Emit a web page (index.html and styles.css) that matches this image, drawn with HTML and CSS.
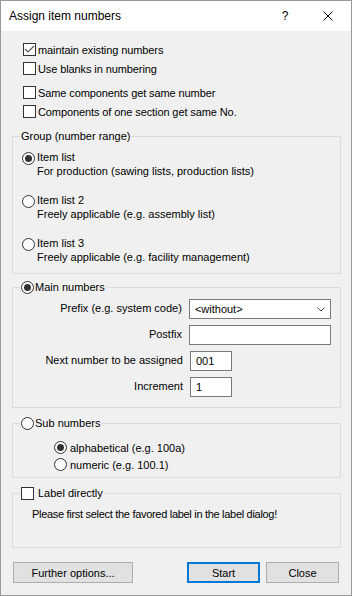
FILE: index.html
```html
<!DOCTYPE html>
<html lang="en">
<head>
    <meta charset="UTF-8">
    <meta name="viewport" content="width=device-width, initial-scale=1.0">
    <title>Assign item numbers</title>
    <link rel="stylesheet" href="styles.css">
</head>
<body>

<div class="window">
    <div class="titlebar">
        <span class="title">Assign item numbers</span>
        <span class="tb-btn help">?</span>
        <span class="tb-btn close">
            <svg width="10" height="10" viewBox="0 0 10 10"><path d="M0.5 0.5 L9.5 9.5 M9.5 0.5 L0.5 9.5" stroke="#000" stroke-width="1" fill="none"/></svg>
        </span>
    </div>

    <div class="content">
        <div class="checks">
            <div class="check-row">
                <span class="check"><svg width="11" height="11" viewBox="0 0 11 11"><path d="M1 5 L4 8 L10 2" stroke="#555" stroke-width="1.2" fill="none"/></svg></span>
                maintain existing numbers
            </div>
            <div class="check-row"><span class="check"></span>Use blanks in numbering</div>
            <div class="check-row spaced"><span class="check"></span>Same components get same number</div>
            <div class="check-row"><span class="check"></span>Components of one section get same No.</div>
        </div>

        <fieldset class="group">
            <legend>Group (number range)</legend>
            <div class="option">
                <span class="radio on"></span>
                <div class="option-text">Item list<br>For production (sawing lists, production lists)</div>
            </div>
            <div class="option">
                <span class="radio"></span>
                <div class="option-text">Item list 2<br>Freely applicable (e.g. assembly list)</div>
            </div>
            <div class="option">
                <span class="radio"></span>
                <div class="option-text">Item list 3<br>Freely applicable (e.g. facility management)</div>
            </div>
        </fieldset>

        <fieldset class="group main">
            <legend class="legend-radio"><span class="radio on"></span>Main numbers</legend>
            <div class="field">
                <label>Prefix (e.g. system code)</label>
                <div class="select">
                    <span>&lt;without&gt;</span>
                    <svg width="8" height="5" viewBox="0 0 8 5"><path d="M0.5 0.5 L4 4 L7.5 0.5" stroke="#444" stroke-width="1" fill="none"/></svg>
                </div>
            </div>
            <div class="field">
                <label>Postfix</label>
                <div class="textbox wide"></div>
            </div>
            <div class="field">
                <label>Next number to be assigned</label>
                <div class="textbox">001</div>
            </div>
            <div class="field">
                <label>Increment</label>
                <div class="textbox">1</div>
            </div>
        </fieldset>

        <fieldset class="group sub">
            <legend class="legend-radio"><span class="radio"></span>Sub numbers</legend>
            <div class="sub-row"><span class="radio on"></span>alphabetical (e.g. 100a)</div>
            <div class="sub-row"><span class="radio"></span>numeric (e.g. 100.1)</div>
        </fieldset>

        <fieldset class="group label">
            <legend class="legend-check"><span class="check"></span>Label directly</legend>
            <p class="hint">Please first select the favored label in the label dialog!</p>
        </fieldset>

        <div class="buttons">
            <button class="btn further">Further options...</button>
            <button class="btn default">Start</button>
            <button class="btn">Close</button>
        </div>
    </div>
</div>

</body>
</html>
```

FILE: styles.css
```css
body { margin: 0; font-family: "Liberation Sans", Arial, sans-serif; font-size: 11px; color: #000; background: #fff; }
.window { width: 352px; height: 596px; box-sizing: border-box; border: 1px solid #999; background: #f0f0f0; display: flex; flex-direction: column; }

/* title bar */
.titlebar { height: 30px; background: #fff; display: flex; align-items: center; line-height: 30px; font-size: 12px; }
.title { flex: 1; padding-left: 8px; }
.tb-btn { display: flex; align-items: center; justify-content: center; height: 30px; }
.help { width: 40px; }
.close { width: 46px; }

.content { padding: 9px 10px 0 11px; }

/* common check / radio look */
.check { width: 13px; height: 13px; box-sizing: border-box; border: 1px solid #333; background: #fff; display: inline-flex; align-items: center; justify-content: center; flex: none; }
.radio { width: 13px; height: 13px; box-sizing: border-box; border: 1px solid #333; border-radius: 50%; background: #fff; display: inline-flex; align-items: center; justify-content: center; flex: none; }
.radio.on::after { content: ""; width: 7px; height: 7px; border-radius: 50%; background: #333; }

.checks { margin-left: 11px; }
.check-row { display: flex; align-items: center; height: 19px; gap: 2px; letter-spacing: -0.1px; }
.check-row.spaced { margin-top: 5px; }

/* group boxes */
.group { margin: 8px 0 0; padding: 7px 9px 9px; border: 1px solid #dcdcdc; min-width: 0; }
.group legend { padding: 0 1px; margin-left: -2px; line-height: 14px; display: flex; align-items: center; }
.group.main { margin-top: 6px; padding: 5px 9px 10px; }
.group.sub { padding: 9px 9px 4px; }
.group.label { padding: 7px 9px 26px; }

.option { display: flex; align-items: flex-start; height: 28px; }
.option + .option { margin-top: 15px; }
.option .radio { margin-top: 2px; }
.option-text { line-height: 14px; margin-left: 2px; }

.legend-radio .radio { margin-right: 1px; }
.legend-check .check { margin-right: 4px; }

/* main numbers fields */
.field { display: flex; align-items: center; height: 20px; }
.field + .field { margin-top: 6px; }
.field label { width: 161px; margin-right: 7px; text-align: right; padding-bottom: 2px; }
.select, .textbox { height: 20px; box-sizing: border-box; border: 1px solid #7a7a7a; background: #fff; display: flex; align-items: center; padding-left: 5px; }
.select { width: 143px; justify-content: space-between; padding-right: 5px; }
.textbox { width: 42px; }
.textbox.wide { width: 143px; }

.sub-row { display: flex; align-items: center; height: 17px; gap: 3px; padding-left: 32px; }

.hint { margin: 0 0 0 10px; line-height: 14px; letter-spacing: -0.3px; }

/* bottom buttons */
.buttons { display: flex; margin: 14px 2px 0 1px; gap: 6px; }
.btn { height: 21px; width: 73px; font-family: inherit; font-size: 11px; color: #000; background: #e1e1e1; border: 1px solid #adadad; padding: 0; }
.btn.further { width: 120px; margin-right: auto; }
.btn.default { border: 2px solid #0078d7; }
```
